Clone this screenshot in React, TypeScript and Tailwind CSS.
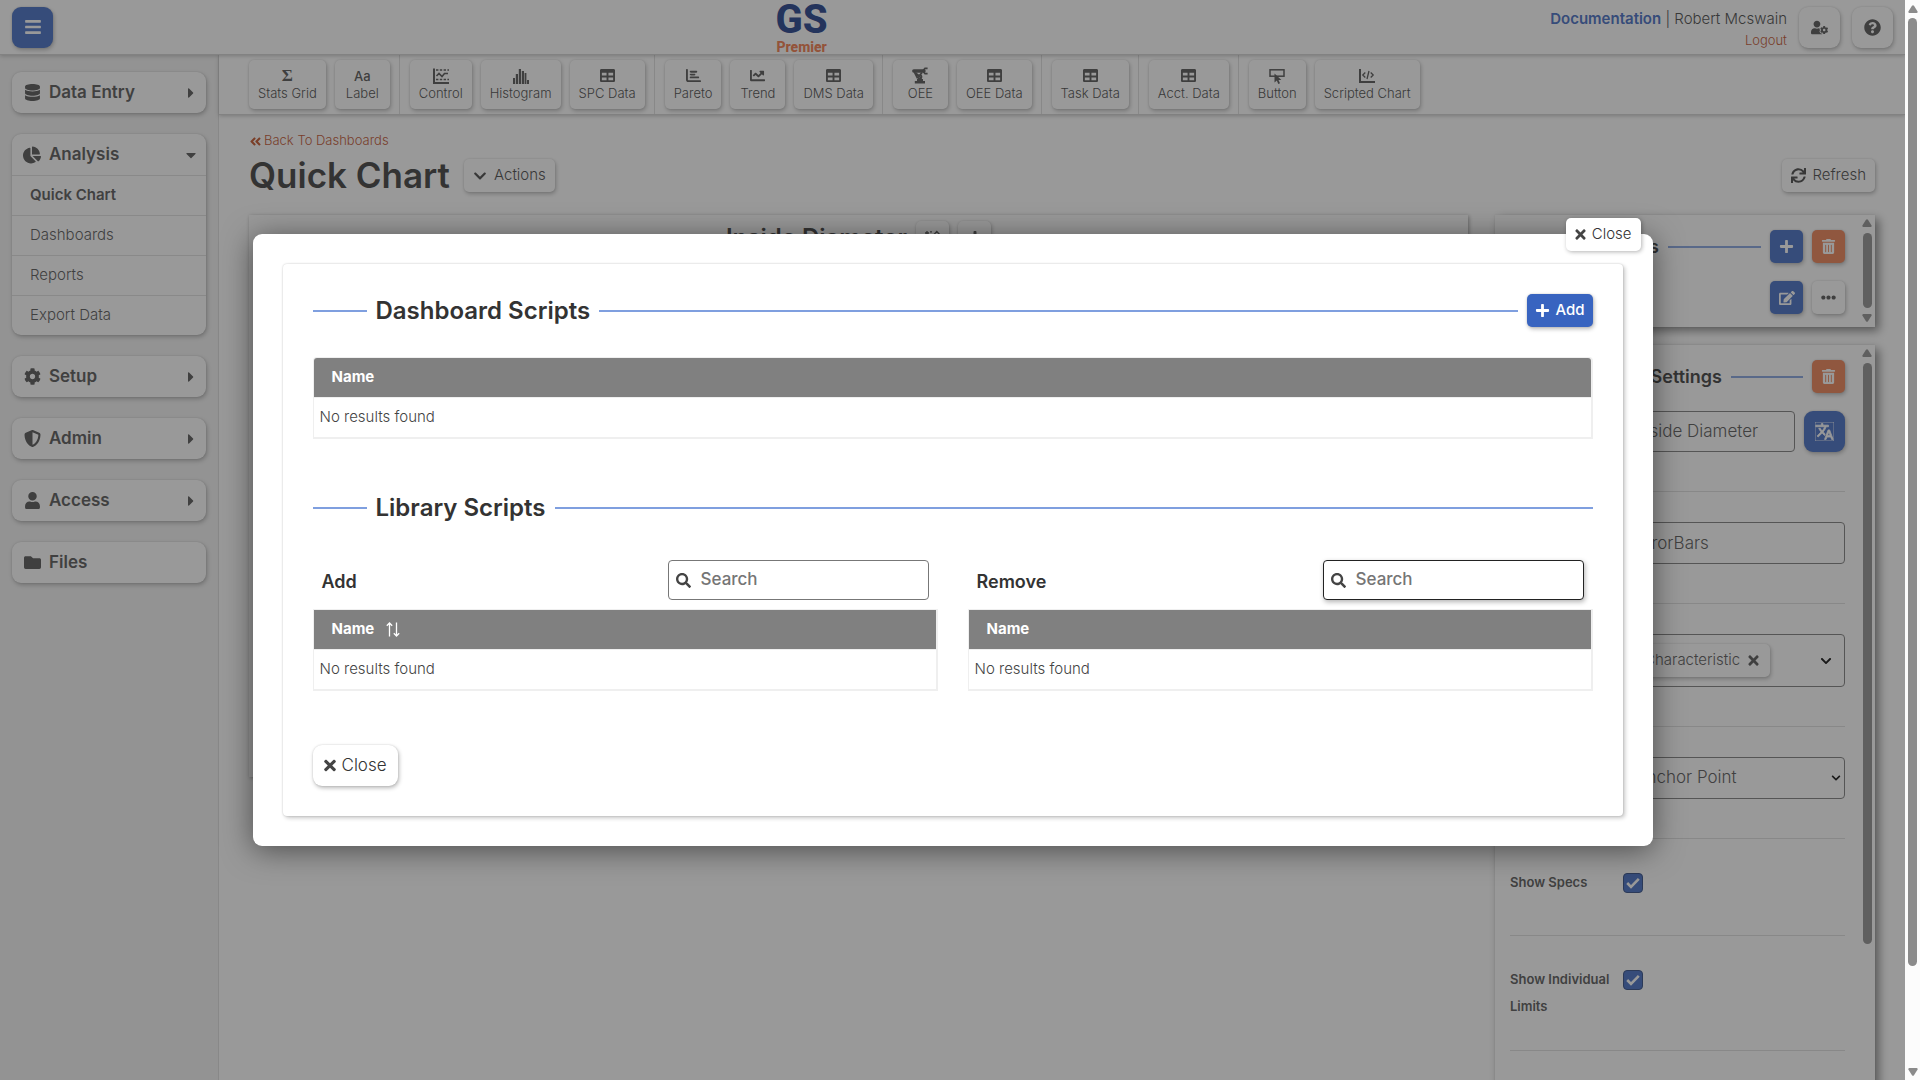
import type { ReactNode } from "react";
import {
  FaAngleDoubleLeft, FaBars, FaCaretDown, FaCaretRight, FaChartLine, FaChartPie, FaChevronDown, FaCog,
  FaDatabase, FaEdit, FaEllipsisH, FaFolder, FaPlus, FaQuestionCircle, FaSearch, FaSync, FaTable, FaTimes,
  FaTrashAlt, FaUser, FaUserCog,
} from "react-icons/fa";
import { FaChartBar, FaShieldHalved } from "react-icons/fa6";
import { MdTranslate } from "react-icons/md";

const ControlIcon = () => (
  <svg width="16" height="16" viewBox="0 0 16 16" fill="none" stroke="currentColor" strokeWidth="2">
    <path d="M1 0.5V15H16" />
    <path d="M3 2H16M3 11.5H16" strokeDasharray="2.4 1.4" strokeWidth="1.6" />
    <path d="M3.5 8L6 5.5L9 8.5L11.5 5.5L15 5.5" strokeWidth="1.6" />
  </svg>
);

const HistogramIcon = () => (
  <svg width="16" height="16" viewBox="0 0 16 16" fill="currentColor">
    <rect x="0" y="10" width="2" height="6" />
    <rect x="2.8" y="6" width="2.2" height="10" />
    <rect x="5.8" y="1" width="2.2" height="15" />
    <rect x="8.8" y="3" width="2.2" height="13" />
    <rect x="11.6" y="5" width="1.8" height="11" />
    <rect x="14" y="12" width="2" height="4" />
  </svg>
);

const RobotArmIcon = () => (
  <svg width="16" height="17" viewBox="0 0 16 17" fill="none" stroke="currentColor">
    <path d="M1.8 4H12" strokeWidth="3.4" strokeLinecap="round" />
    <path d="M15.6 1.4H13L11.6 3V5L13 6.6H15.6" strokeWidth="1.7" />
    <path d="M2.4 5L5.6 11.4M10 5.4L8 8M3.6 6L9.6 11.4" strokeWidth="1.7" />
    <circle cx="7.8" cy="9.8" r="1.8" strokeWidth="1.5" />
    <path d="M2.8 15.2H13M5 13.2H11" strokeWidth="2.6" />
  </svg>
);

const ButtonIcon = () => (
  <svg width="16" height="16" viewBox="0 0 16 16">
    <rect x="1" y="1.8" width="14" height="6.4" fill="none" stroke="currentColor" strokeWidth="1.5" />
    <path d="M5.5 5.5V14.5L7.8 12.6L9.3 16L11 15.2L9.5 12H12.4Z" fill="currentColor" />
  </svg>
);

const ScriptIcon = () => (
  <svg width="16" height="16" viewBox="0 0 16 16" fill="none" stroke="currentColor" strokeWidth="1.6">
    <path d="M1 1V14H16" strokeWidth="2" />
    <path d="M6.3 4.5L3.8 7L6.3 9.5M11.7 4.5L14.2 7L11.7 9.5M10 3L8 11" strokeWidth="1.3" />
  </svg>
);

const SortIcon = () => (
  <svg width="14" height="15" viewBox="0 0 14 15" fill="none" stroke="currentColor" strokeWidth="1.3">
    <path d="M3.5 14.5V1M0.8 3.8L3.5 1L6.2 3.8M10.5 0.5V14M7.8 11.2L10.5 14L13.2 11.2" />
  </svg>
);

const SpreadIcon = () => (
  <svg width="16" height="16" viewBox="0 0 16 16" fill="none" stroke="currentColor" strokeWidth="1.3">
    <path d="M0 3H4M2 1V5M5 1.8H7M8.5 5L11.8 1.5L15 5M2 9V15H15" />
  </svg>
);

const Triangle = ({ up }: { up?: boolean }) => (
  <svg width="10" height="8" viewBox="0 0 10 8" fill="currentColor">
    {up ? <path d="M4 0.8Q5 -0.4 6 0.8L9.6 6.6Q9.8 8 8.6 8H1.4Q0.2 8 0.4 6.6Z" /> : <path d="M4 7.2Q5 8.4 6 7.2L9.6 1.4Q9.8 0 8.6 0H1.4Q0.2 0 0.4 1.4Z" />}
  </svg>
);

const Soft = "shadow-[1px_2px_4px_rgba(0,0,0,0.28),0_0_2px_rgba(0,0,0,0.14)]";

const navItems = [
  { label: "Data Entry", icon: <FaDatabase size={17} />, open: false, arrow: true },
  { label: "Analysis", icon: <FaChartPie size={18} />, open: true, arrow: true },
  { label: "Setup", icon: <FaCog size={17} />, open: false, arrow: true },
  { label: "Admin", icon: <FaShieldHalved size={17} />, open: false, arrow: true },
  { label: "Access", icon: <FaUser size={17} />, open: false, arrow: true },
  { label: "Files", icon: <FaFolder size={17} />, open: false, arrow: false },
];
const subItems = ["Quick Chart", "Dashboards", "Reports", "Export Data"];

function Sidebar() {
  return (
    <nav className="flex w-[219px] shrink-0 flex-col gap-[21px] border-r border-[#dcdcdc] bg-[#f2f2f2] px-3 pt-[17px]">
      {navItems.map((n) => (
        <div key={n.label} className={`overflow-hidden rounded-[9px] bg-white ${Soft}`}>
          <button className="flex h-[41px] w-full items-center pr-[7px] pl-[11px] text-[17px] font-semibold text-[#4d4d4d]">
            <span className="flex w-[18px] justify-center text-[#4a4a4a]">{n.icon}</span>
            <span className="ml-2 flex-1 text-left">{n.label}</span>
            {n.arrow && (n.open ? <FaCaretDown size={16} /> : <FaCaretRight size={16} />)}
          </button>
          {n.open &&
            subItems.map((s, i) => (
              <a
                key={s}
                href="#"
                className={`flex h-10 items-center border-t border-[#dedede] pl-[18px] text-[15px] text-[#4d4d4d] ${i === 0 ? "font-semibold" : "font-light"}`}
              >
                {s}
              </a>
            ))}
        </div>
      ))}
    </nav>
  );
}

const table = <FaTable size={15} />;
const tools: [string, ReactNode][][] = [
  [["Stats Grid", <span className="font-serif text-[17px] font-bold">Σ</span>], ["Label", <span className="text-[13px] font-medium">Aa</span>]],
  [["Control", <ControlIcon />], ["Histogram", <HistogramIcon />], ["SPC Data", table]],
  [["Pareto", <FaChartBar size={15} />], ["Trend", <FaChartLine size={15} />], ["DMS Data", table]],
  [["OEE", <RobotArmIcon />], ["OEE Data", table]],
  [["Task Data", table]],
  [["Acct. Data", table]],
  [["Button", <ButtonIcon />], ["Scripted Chart", <ScriptIcon />]],
];

function Toolbar() {
  return (
    <div className="flex h-[60px] border-b border-[#d0d0d0] pl-5 shadow-[0_1px_4px_rgba(0,0,0,0.25)]">
      {tools.map((group, i) => (
        <div key={i} className={`flex items-center gap-[9px] pr-[9px] pl-[10px] ${i < tools.length - 1 ? "border-r border-[#dcdcdc]" : ""}`}>
          {group.map(([label, icon]) => (
            <button key={label} className={`flex h-[49px] min-w-[55px] flex-col items-center justify-center rounded-[5px] bg-white px-[9px] text-[13px] font-light text-[#3c3c3c] ${Soft}`}>
              <span className="flex h-4 items-center leading-4 text-[#4a4a4a]">{icon}</span>
              <span className="leading-[18px] whitespace-nowrap">{label}</span>
            </button>
          ))}
        </div>
      ))}
    </div>
  );
}

function Header() {
  return (
    <header className="z-10 flex h-[55px] items-center border-b border-[#d0d0d0] bg-white px-3 shadow-[0_1px_4px_rgba(0,0,0,0.25)]">
      <button aria-label="Menu" className={`flex size-[41px] items-center justify-center rounded-[9px] bg-[#3864c0] text-white ${Soft}`}>
        <FaBars size={18} />
      </button>
      <div className="flex flex-1 flex-col items-center font-[Roboto]">
        <span className="text-[40px] leading-10 font-extrabold text-[#153585]">GS</span>
        <span className="text-[14px] leading-[14px] font-extrabold text-[#f27240]">Premier</span>
      </div>
      <div className="flex items-center justify-end gap-3">
        <div className="pt-1 text-right text-[15px] leading-[21px] font-light text-[#3c3c3c]">
          <div>
            <a href="#" className="font-semibold text-[#3864c0]">Documentation</a> | Robert Mcswain
          </div>
          <a href="#" className="text-[13px] text-[#c04a1c]">Logout</a>
        </div>
        <button aria-label="User settings" className={`flex size-[41px] items-center justify-center rounded-[9px] bg-white text-[#4a4a4a] ${Soft}`}>
          <FaUserCog size={17} />
        </button>
        <button aria-label="Help" className={`flex size-[41px] items-center justify-center rounded-[9px] bg-white text-[#4a4a4a] ${Soft}`}>
          <FaQuestionCircle size={17} />
        </button>
      </div>
    </header>
  );
}

function IconButton({ label, tone, children }: { label: string; tone: "blue" | "orange" | "white"; children: ReactNode }) {
  const tones = { blue: "bg-[#3864c0] text-white", orange: "bg-[#ed7b4b] text-white", white: "bg-white text-[#4a4a4a]" };
  return (
    <button aria-label={label} className={`flex size-[33px] shrink-0 items-center justify-center rounded-[5px] ${tones[tone]} ${Soft}`}>
      {children}
    </button>
  );
}

function PanelScroll({ thumb, down }: { thumb: string; down?: boolean }) {
  return (
    <div aria-hidden className="flex w-[13px] shrink-0 flex-col items-center gap-[6px] pt-1 pr-[3px] text-[#8b8b8b]">
      <Triangle up />
      <div className={`w-[9px] rounded-full bg-[#8b8b8b] ${thumb}`} />
      {down && <Triangle />}
    </div>
  );
}

const panelShadow = "shadow-[4px_4px_9px_rgba(0,0,0,0.5),0_0_2px_rgba(0,0,0,0.1)]";

function Setting({ label, id, children }: { label: string; id: string; children: ReactNode }) {
  return (
    <div className="flex border-b border-[#dcdcdc] py-[30px]">
      <label htmlFor={id} className="w-[113px] shrink-0 text-[13px] leading-[27px] font-semibold text-[#4d4d4d]">
        {label}
      </label>
      <div className="mb-[9px] min-w-0 flex-1">{children}</div>
    </div>
  );
}

function Check({ id }: { id: string }) {
  return (
    <span className="grid h-[27px] w-5 place-items-center">
      <input id={id} type="checkbox" defaultChecked className="col-start-1 row-start-1 size-5 appearance-none rounded-[4px] border border-[#24407c] bg-[#3864c0]" />
      <svg className="pointer-events-none col-start-1 row-start-1" width="14" height="12" viewBox="0 0 14 12" fill="none" stroke="white" strokeWidth="2.6">
        <path d="M1.2 6L5 9.8L12.8 1.8" />
      </svg>
    </span>
  );
}

const field = "w-full rounded-[4px] border border-[#777] bg-white px-[11px] text-[17px] font-light text-[#4d4d4d]";

function SidePanels() {
  return (
    <div className="flex w-[380px] shrink-0 flex-col gap-[18px]">
      <section className={`flex h-[112px] bg-white ${panelShadow}`}>
        <div className="flex flex-1 flex-col gap-[18px] pt-[15px] pr-[17px] pl-[15px]">
          <div className="flex items-center gap-[9px]">
            <span className="h-[2px] flex-1 bg-[#7f9fdf]" />
            <h2 className="text-[18px] font-semibold text-[#333]">Charts</h2>
            <span className="h-[2px] w-[93px] bg-[#7f9fdf]" />
            <IconButton label="Add chart" tone="blue"><FaPlus size={15} /></IconButton>
            <IconButton label="Delete chart" tone="orange"><FaTrashAlt size={15} /></IconButton>
          </div>
          <div className="flex justify-end gap-[9px]">
            <IconButton label="Edit" tone="blue"><FaEdit size={16} /></IconButton>
            <IconButton label="More" tone="white"><FaEllipsisH size={15} /></IconButton>
          </div>
        </div>
        <PanelScroll thumb="h-[75px]" down />
      </section>

      <section className={`flex h-[900px] bg-white ${panelShadow}`}>
        <div className="flex flex-1 flex-col pt-[15px] pr-[17px] pl-[15px]">
          <div className="-mb-3 flex items-center gap-[9px]">
            <span className="h-[2px] flex-1 bg-[#7f9fdf]" />
            <h2 className="text-[18px] font-semibold text-[#333]">Chart Settings</h2>
            <span className="h-[2px] w-[72px] bg-[#7f9fdf]" />
            <IconButton label="Delete" tone="orange"><FaTrashAlt size={15} /></IconButton>
          </div>
          <Setting label="Title" id="title">
            <div className="flex h-[41px] gap-[9px]">
              <input id="title" defaultValue="Inside Diameter" className={field} />
              <button aria-label="Translate" className={`flex size-[41px] shrink-0 items-center justify-center rounded-[9px] bg-[#3864c0] text-white ${Soft}`}>
                <MdTranslate size={19} stroke="currentColor" strokeWidth="1" />
              </button>
            </div>
          </Setting>
          <Setting label="Type" id="type">
            <input id="type" defaultValue="ErrorBars" className={`h-[42px] ${field}`} />
          </Setting>
          <Setting label="Levels" id="levels">
            <div className="flex h-[53px] items-center justify-between rounded-[4px] border border-[#777] pr-3 pl-[9px]">
              <span className={`flex h-[33px] items-center gap-2 rounded-[5px] bg-white px-[11px] text-[15px] font-light text-[#4d4d4d] ${Soft}`}>
                Characteristic
                <button aria-label="Remove Characteristic"><FaTimes size={15} className="w-[11px]" /></button>
              </span>
              <button id="levels" aria-label="Open levels"><FaChevronDown size={12} /></button>
            </div>
          </Setting>
          <Setting label="Anchor" id="anchor">
            <div className="grid items-center">
              <select id="anchor" className={`h-[42px] ${field} col-start-1 row-start-1 appearance-none`}>
                <option>Anchor Point</option>
              </select>
              <FaChevronDown size={10} className="pointer-events-none col-start-1 row-start-1 mr-1 justify-self-end" />
            </div>
          </Setting>
          <Setting label="Show Specs" id="specs"><Check id="specs" /></Setting>
          <Setting label="Show Individual Limits" id="limits"><Check id="limits" /></Setting>
        </div>
        <PanelScroll thumb="h-[581px]" />
      </section>
    </div>
  );
}

function ResultTable({ sortable, rounded }: { sortable?: boolean; rounded?: boolean }) {
  return (
    <div className={`w-full border border-r-2 border-b-2 border-[#efefef] ${rounded ? "rounded-t-[4px]" : ""}`}>
      <table className="w-full text-left text-[15px]">
        <thead>
          <tr className="h-[39px] text-white">
            <th scope="col" className={`bg-[#808080] pl-[18px] font-bold ${rounded ? "rounded-t-[3px]" : ""}`}>
              <span className="flex items-center gap-3">
                Name
                {sortable && <SortIcon />}
              </span>
            </th>
          </tr>
        </thead>
        <tbody>
          <tr className="h-10 border-t border-[#efefef]">
            <td className="pl-[6px] font-light text-[#444]">No results found</td>
          </tr>
        </tbody>
      </table>
    </div>
  );
}

function SectionHeading({ title, children }: { title: string; children?: ReactNode }) {
  return (
    <div className="flex h-[33px] items-center gap-[9px]">
      <span className="h-[2px] w-[54px] bg-[#7f9fdf]" />
      <h2 className="text-[24px] leading-[30px] font-semibold text-[#333]">{title}</h2>
      <span className="h-[2px] flex-1 bg-[#7f9fdf]" />
      {children}
    </div>
  );
}

function LibraryColumn({ title, sortable, active }: { title: string; sortable?: boolean; active?: boolean }) {
  return (
    <div className="flex flex-1 flex-col gap-[9px]">
      <div className="flex items-center justify-between px-[9px]">
        <h3 className="pt-[3px] text-[18px] font-semibold text-[#333]">{title}</h3>
        <div
          className={`flex h-10 w-[261px] items-center gap-[10px] rounded-[4px] border bg-white pl-[7px] ${active ? "border-[#222] shadow-[1px_2px_5px_rgba(0,0,0,0.3)]" : "border-[#777]"}`}
        >
          <FaSearch size={15} className="shrink-0 text-[#444]" />
          <input aria-label={`Search ${title}`} placeholder="Search" className="w-full min-w-0 text-[17px] font-medium outline-none placeholder:text-[#757575]" />
        </div>
      </div>
      <ResultTable sortable={sortable} />
    </div>
  );
}

function ScriptsDialog() {
  return (
    <div className="absolute inset-0 z-20 flex items-center justify-center bg-[#333]/50">
      <div role="dialog" aria-label="Scripts" className="relative w-[1400px] rounded-[9px] bg-white p-[30px] shadow-[0_4px_30px_rgba(0,0,0,0.5)]">
        <button className="absolute -top-4 right-3 flex h-[33px] items-center gap-1.5 rounded-[5px] bg-white px-[9px] text-[15px] font-light text-[#333] shadow-[1px_1px_4px_rgba(0,0,0,0.3)]">
          <FaTimes size={15} className="w-[11px] text-[#444]" />
          Close
        </button>
        <div className="rounded-[4px] bg-white p-[30px] shadow-[2px_2px_4px_rgba(0,0,0,0.22),0_0_2px_rgba(0,0,0,0.2)]">
          <SectionHeading title="Dashboard Scripts">
            <button className={`flex h-[33px] items-center gap-[5px] rounded-[5px] bg-[#3864c0] px-2 text-[15px] font-medium text-white ${Soft}`}>
              <FaPlus size={15} />
              Add
            </button>
          </SectionHeading>
          <div className="mt-[30px] mb-[52px]">
            <ResultTable rounded />
          </div>
          <SectionHeading title="Library Scripts" />
          <div className="mt-9 flex gap-[30px]">
            <LibraryColumn title="Add" sortable />
            <LibraryColumn title="Remove" active />
          </div>
          <button className={`mt-[54px] flex h-[41px] items-center gap-1.5 rounded-[9px] bg-white px-[11px] text-[17px] font-light text-[#333] ${Soft}`}>
            <FaTimes size={17} className="w-3 text-[#444]" />
            Close
          </button>
        </div>
      </div>
    </div>
  );
}

export default function App() {
  return (
    <div className="flex h-screen overflow-hidden bg-white font-[Inter,sans-serif]">
      <div className="relative flex min-w-0 flex-1 flex-col overflow-hidden">
        <Header />
        <div className="flex min-h-0 flex-1">
          <Sidebar />
          <main className="min-w-0 flex-1">
            <Toolbar />
            <div className="px-[30px] pt-[13px]">
              <a href="#" className="flex h-[26px] items-center gap-[2px] text-[13px] font-light text-[#c04a1c]">
                <FaAngleDoubleLeft size={13} />
                Back To Dashboards
              </a>
              <div className="flex h-[43px] items-center">
                <h1 className="text-[35px] font-semibold text-[#333]">Quick Chart</h1>
                <button className={`ml-[14px] flex h-[33px] items-center gap-[7px] rounded-[5px] bg-white px-[9px] text-[15px] font-light text-[#3c3c3c] ${Soft}`}>
                  <FaChevronDown size={14} />
                  Actions
                </button>
                <button className={`ml-auto flex h-[33px] items-center gap-1.5 rounded-[5px] bg-white px-[9px] text-[15px] font-light text-[#3c3c3c] ${Soft}`}>
                  <FaSync size={15} />
                  Refresh
                </button>
              </div>
              <div className="mt-[18px] flex items-start gap-[27px]">
                <section className="flex h-[562px] flex-1 items-start justify-center gap-[9px] bg-white pt-[6px] shadow-[1px_1px_4px_rgba(0,0,0,0.4)]">
                  <h2 className="text-[24px] leading-[33px] font-semibold text-[#333]">Inside Diameter</h2>
                  <IconButton label="Chart points" tone="white"><SpreadIcon /></IconButton>
                  <IconButton label="Add series" tone="white"><FaPlus size={16} /></IconButton>
                </section>
                <SidePanels />
              </div>
            </div>
          </main>
        </div>
        <ScriptsDialog />
      </div>
      <div aria-hidden className="flex w-[15px] shrink-0 flex-col items-center bg-[#fcfcfc] pt-[5px] pb-1 text-[#8b8b8b]">
        <Triangle up />
        <div className="mt-[5px] h-[948px] w-[9px] rounded-full bg-[#8b8b8b]" />
        <div className="flex-1" />
        <Triangle />
      </div>
    </div>
  );
}
